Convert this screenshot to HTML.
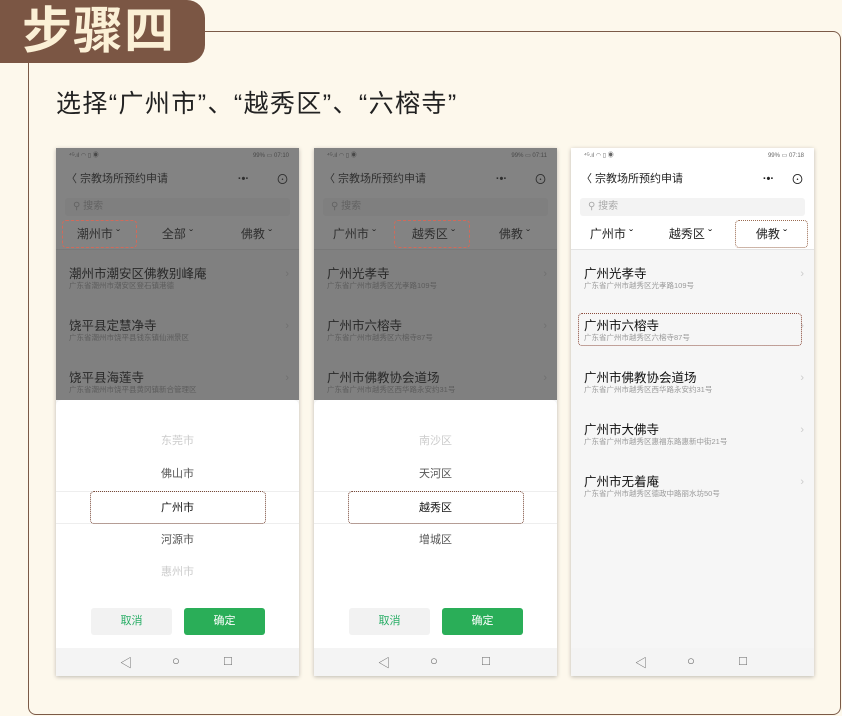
<!DOCTYPE html>
<html><head><meta charset="utf-8"><style>
*{margin:0;padding:0;box-sizing:border-box}
body{width:842px;height:716px;background:#fdf8ec;position:relative;overflow:hidden;font-family:"Liberation Sans","Noto Sans CJK SC",sans-serif}
.panel{position:absolute;left:28px;top:31px;width:813px;height:684px;border:1.5px solid #7b5a47;border-radius:8px;background:#fdf8ec}
.badge{position:absolute;left:0;top:0;width:205px;height:63px;background:#7b5644;border-radius:0 18px 18px 0;color:#fbf0d6;font-size:50px;font-weight:bold;line-height:63px;padding-left:22px;letter-spacing:1px}
.h{position:absolute;left:56px;top:88px;font-size:25px;color:#222;line-height:32px;letter-spacing:1.4px}
.ph{position:absolute;top:148px;width:243px;height:528px;background:#f6f6f6;box-shadow:0 1px 4px rgba(0,0,0,.25);overflow:hidden;font-size:11px;color:#222}
.ph>div{position:absolute}
.sb{left:0;top:0;width:100%;height:16px;background:#fff;font-size:6px;color:#666;line-height:16px}
.hd{top:16px;left:0;width:100%;height:31px;background:#fff;line-height:31px;font-size:11px}
.se{top:47px;left:0;width:100%;height:23px;background:#fff}
.se span{position:absolute;left:9px;top:3px;width:225px;height:18px;background:#f3f3f3;border-radius:3px;color:#aaa;font-size:10px;line-height:18px;padding-left:8px}
.tb{top:70px;left:0;width:100%;height:32px;background:#fff;border-bottom:1px solid #e4e4e4;font-size:12px;line-height:32px}
.tb i{position:absolute;font-style:normal;width:81px;text-align:center}
.it{left:0;width:100%;height:52px}
.it b{position:absolute;left:13px;top:13px;font-weight:normal;font-size:12.5px;color:#111}
.it s{position:absolute;left:13px;top:30px;text-decoration:none;font-size:7.5px;color:#999}
.it u{position:absolute;right:10px;top:18px;text-decoration:none;color:#ccc;font-size:11px}
.ov{left:0;top:0;width:100%;height:252px;background:rgba(55,55,55,.62)}
.sh{left:0;top:252px;width:100%;height:248px;background:#fff;border-radius:6px 6px 0 0}
.op{position:absolute;left:0;width:100%;text-align:center;font-size:11px;color:#555;height:33px;line-height:33px}
.nav{left:0;top:500px;width:100%;height:28px;background:#f4f4f4}
.btn{position:absolute;top:208px;height:27px;width:81px;border-radius:3px;text-align:center;line-height:27px;font-size:11px}
.dot{position:absolute;border:1px dotted #8a4a3a;border-radius:4px}
</style></head><body>
<div class="panel"></div>
<div class="badge">步骤四</div>
<div class="h">选择“广州市”、“越秀区”、“六榕寺”</div>

<div class="ph" style="left:56px">
 <div class="sb"><span style="position:absolute;left:13px">⁴ᴳ.ıl ◠ ▯ ◉</span><span style="position:absolute;right:10px">99% ▭ 07:10</span></div>
 <div class="hd"><span style="position:absolute;left:10px">〈 宗教场所预约申请</span><span style="position:absolute;right:50px;font-weight:bold">·•·</span><span style="position:absolute;right:10px;font-size:13px">⊙</span></div>
 <div class="se"><span>⚲ 搜索</span></div>
 <div class="tb"><i style="left:2px">潮州市 ˇ</i><i style="left:81px">全部 ˇ</i><i style="left:160px">佛教 ˇ</i></div>
 <div class="it" style="top:102px"><b>潮州市潮安区佛教别峰庵</b><s>广东省潮州市潮安区登石镇港德</s><u>›</u></div>
 <div class="it" style="top:154px"><b>饶平县定慧净寺</b><s>广东省潮州市饶平县钱东镇仙洲景区</s><u>›</u></div>
 <div class="it" style="top:206px"><b>饶平县海莲寺</b><s>广东省潮州市饶平县黄冈镇新合管理区</s><u>›</u></div>
 <div class="ov"></div>
 <div class="dot" style="left:6px;top:72px;width:75px;height:28px;border-color:#d06a5a;border-style:dashed"></div>
 <div class="sh">
  <div class="op" style="top:25px;color:#ccc">东莞市</div>
  <div class="op" style="top:58px">佛山市</div>
  <div class="op" style="top:91px;color:#111;border-top:1px solid #eee;border-bottom:1px solid #eee">广州市</div>
  <div class="op" style="top:124px">河源市</div>
  <div class="op" style="top:156px;color:#ccc">惠州市</div>
  <div class="dot" style="left:34px;top:91px;width:176px;height:33px;border-color:#7a4a3a"></div>
  <div class="btn" style="left:35px;background:#f2f2f2;color:#2aae67">取消</div>
  <div class="btn" style="left:128px;background:#2aae58;color:#fff">确定</div>
 </div>
 <div class="nav"><span style="position:absolute;left:64px;top:6px;color:#666;font-size:12px">◁</span><span style="position:absolute;left:116px;top:5px;color:#666;font-size:13px">○</span><span style="position:absolute;left:168px;top:5px;color:#666;font-size:13px">□</span></div>
</div>

<div class="ph" style="left:314px">
 <div class="sb"><span style="position:absolute;left:13px">⁴ᴳ.ıl ◠ ▯ ◉</span><span style="position:absolute;right:10px">99% ▭ 07:11</span></div>
 <div class="hd"><span style="position:absolute;left:10px">〈 宗教场所预约申请</span><span style="position:absolute;right:50px;font-weight:bold">·•·</span><span style="position:absolute;right:10px;font-size:13px">⊙</span></div>
 <div class="se"><span>⚲ 搜索</span></div>
 <div class="tb"><i style="left:0">广州市 ˇ</i><i style="left:79px">越秀区 ˇ</i><i style="left:160px">佛教 ˇ</i></div>
 <div class="it" style="top:102px"><b>广州光孝寺</b><s>广东省广州市越秀区光孝路109号</s><u>›</u></div>
 <div class="it" style="top:154px"><b>广州市六榕寺</b><s>广东省广州市越秀区六榕寺87号</s><u>›</u></div>
 <div class="it" style="top:206px"><b>广州市佛教协会道场</b><s>广东省广州市越秀区西华路永安约31号</s><u>›</u></div>
 <div class="ov"></div>
 <div class="dot" style="left:80px;top:72px;width:76px;height:28px;border-color:#d06a5a;border-style:dashed"></div>
 <div class="sh">
  <div class="op" style="top:25px;color:#ccc">南沙区</div>
  <div class="op" style="top:58px">天河区</div>
  <div class="op" style="top:91px;color:#111;border-top:1px solid #eee;border-bottom:1px solid #eee">越秀区</div>
  <div class="op" style="top:124px">增城区</div>
  <div class="dot" style="left:34px;top:91px;width:176px;height:33px;border-color:#7a4a3a"></div>
  <div class="btn" style="left:35px;background:#f2f2f2;color:#2aae67">取消</div>
  <div class="btn" style="left:128px;background:#2aae58;color:#fff">确定</div>
 </div>
 <div class="nav"><span style="position:absolute;left:64px;top:6px;color:#666;font-size:12px">◁</span><span style="position:absolute;left:116px;top:5px;color:#666;font-size:13px">○</span><span style="position:absolute;left:168px;top:5px;color:#666;font-size:13px">□</span></div>
</div>

<div class="ph" style="left:571px">
 <div class="sb"><span style="position:absolute;left:13px">⁴ᴳ.ıl ◠ ▯ ◉</span><span style="position:absolute;right:10px">99% ▭ 07:18</span></div>
 <div class="hd"><span style="position:absolute;left:10px">〈 宗教场所预约申请</span><span style="position:absolute;right:40px;font-weight:bold">·•·</span><span style="position:absolute;right:10px;font-size:13px">⊙</span></div>
 <div class="se"><span>⚲ 搜索</span></div>
 <div class="tb"><i style="left:0">广州市 ˇ</i><i style="left:79px">越秀区 ˇ</i><i style="left:160px">佛教 ˇ</i></div>
 <div class="dot" style="left:164px;top:72px;width:73px;height:28px;border-color:#9a6a50"></div>
 <div class="it" style="top:102px"><b>广州光孝寺</b><s>广东省广州市越秀区光孝路109号</s><u>›</u></div>
 <div class="it" style="top:154px"><b>广州市六榕寺</b><s>广东省广州市越秀区六榕寺87号</s><u>›</u></div>
 <div class="it" style="top:206px"><b>广州市佛教协会道场</b><s>广东省广州市越秀区西华路永安约31号</s><u>›</u></div>
 <div class="it" style="top:258px"><b>广州市大佛寺</b><s>广东省广州市越秀区惠福东路惠新中街21号</s><u>›</u></div>
 <div class="it" style="top:310px"><b>广州市无着庵</b><s>广东省广州市越秀区德政中路丽水坊50号</s><u>›</u></div>
 <div class="dot" style="left:7px;top:165px;width:224px;height:33px;border-color:#8a4a3a"></div>
 <div class="nav"><span style="position:absolute;left:64px;top:6px;color:#666;font-size:12px">◁</span><span style="position:absolute;left:116px;top:5px;color:#666;font-size:13px">○</span><span style="position:absolute;left:168px;top:5px;color:#666;font-size:13px">□</span></div>
</div>
</body></html>
